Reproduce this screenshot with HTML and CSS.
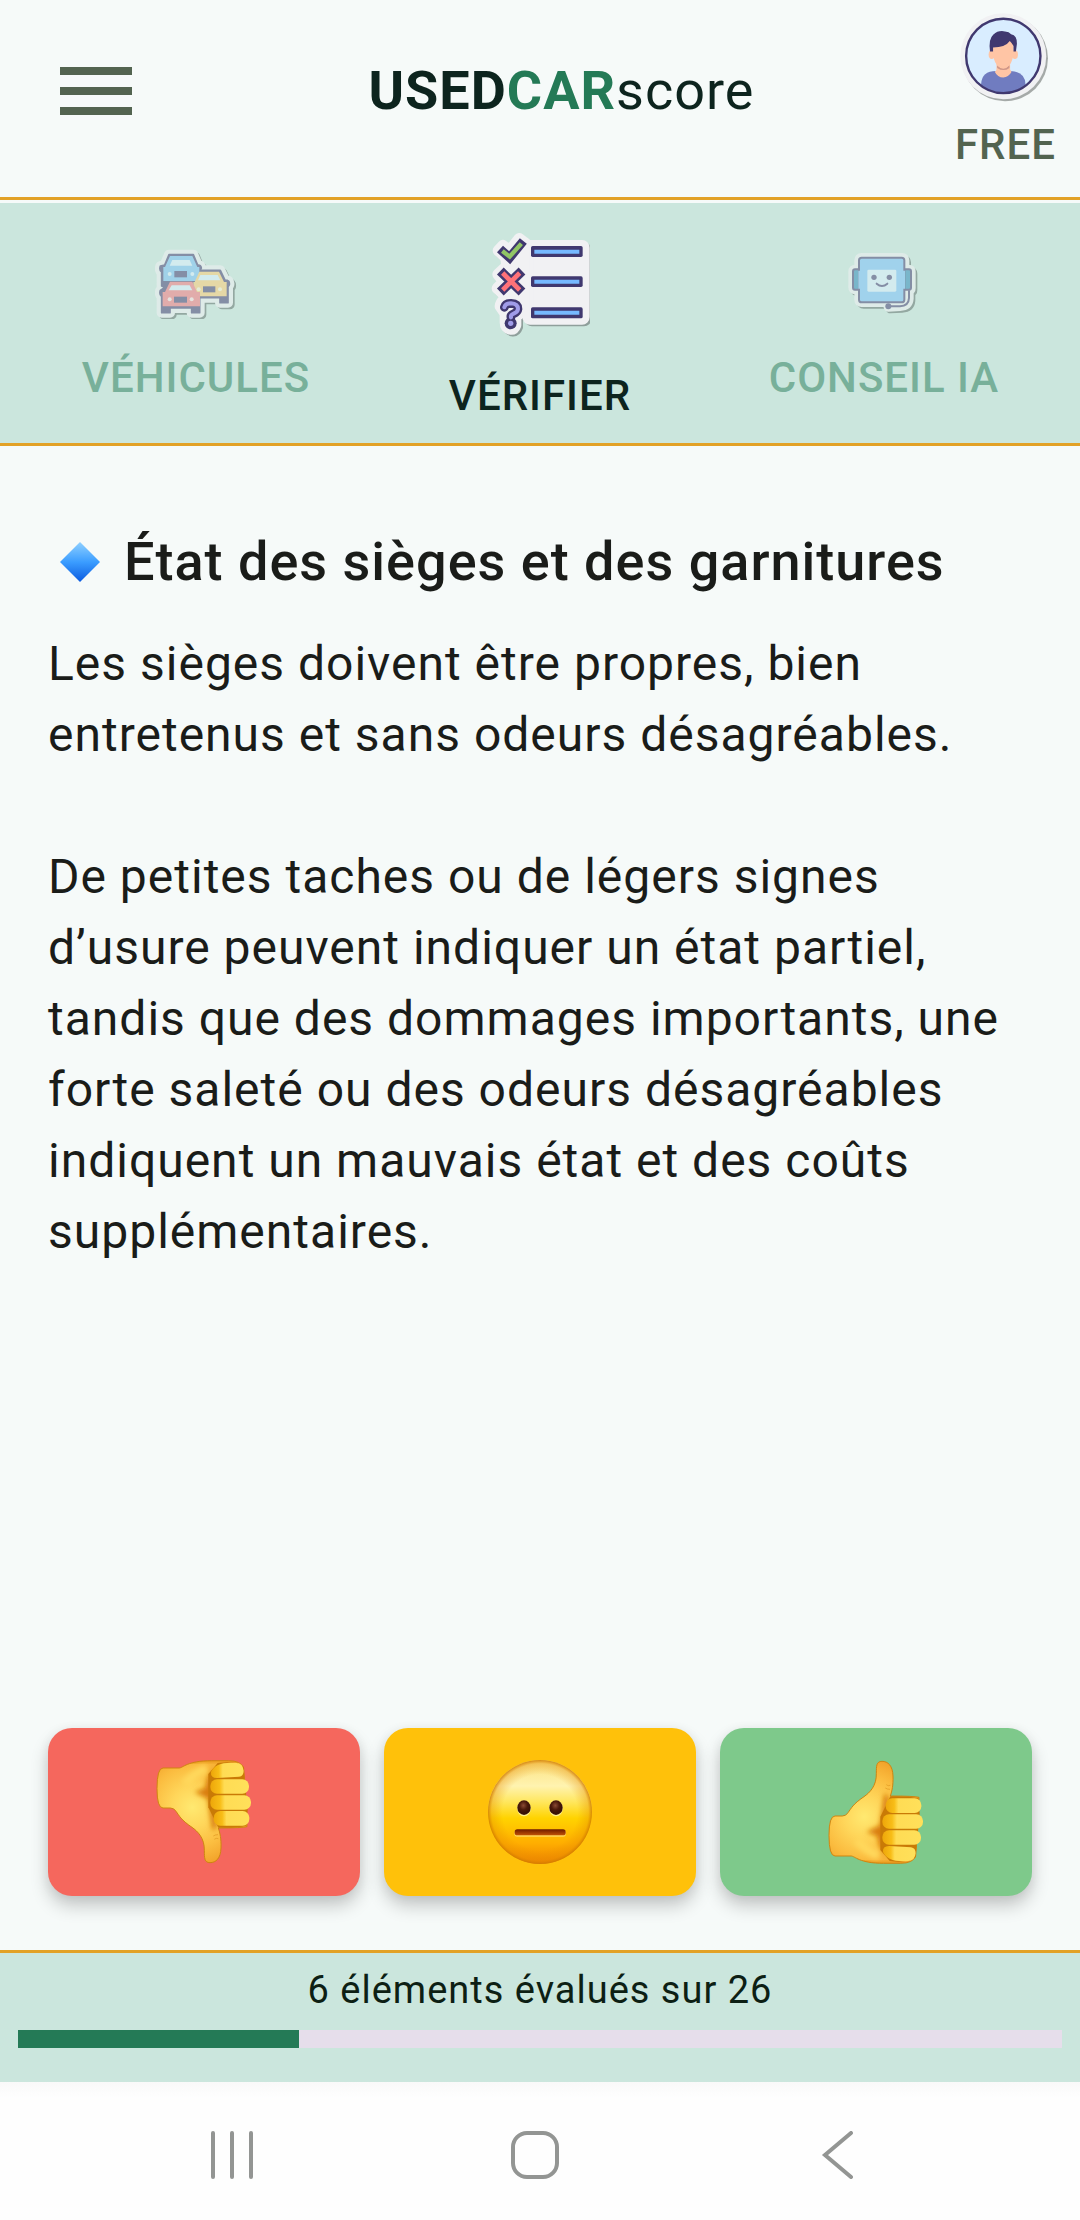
FILE: index.html
```html
<!DOCTYPE html>
<html lang="fr">
<head>
  <meta charset="UTF-8" />
  <meta name="viewport" content="width=device-width, initial-scale=1.0" />
  <title>USEDCARscore</title>
  <link rel="stylesheet" href="styles.css">
</head>
<body>
  <header class="topbar">
    <button class="menu-btn" type="button" aria-label="Menu">
      <span></span><span></span><span></span>
    </button>
    <h1 class="brand">USED<span class="brand-car">CAR</span><span class="brand-score">score</span></h1>
    <a class="account" href="#compte">
      <svg class="avatar" viewBox="0 0 264 264" aria-hidden="true">
        <defs>
          <clipPath id="face-clip"><circle cx="127" cy="126" r="108" /></clipPath>
        </defs>
        <circle cx="132" cy="133" r="126" fill="#a5aaa8" />
        <circle cx="127" cy="127" r="126" fill="#f1f1f3" />
        <circle cx="127" cy="126" r="109" fill="#d9edff" />
        <g clip-path="url(#face-clip)">
          <path d="M62 240V208Q64 170 106 170H148Q190 172 192 208V240Z" fill="#707cc0" />
          <path d="M107 148H147V166Q151 171 151 173Q142 189 127 189Q110 189 102 172Q107 170 107 165Z" fill="#ffc5a5" />
          <path d="M109 153Q127 174 145 153V161Q128 174 109 161Z" fill="#cf9688" />
          <ellipse cx="93" cy="122" rx="9" ry="13" fill="#ffc5a5" />
          <ellipse cx="161" cy="122" rx="9" ry="13" fill="#ffc5a5" />
          <path d="M97 96Q97 80 127 80Q157 80 157 96V122Q152 151 139 158Q127 165 114 158Q101 150 97 122Z" fill="#ffc5a5" />
          <path d="M88 113Q83 76 98 63Q112 50 132 54Q144 55 150 62Q168 66 167 90L164 113H157V97Q151 86 146 82Q133 101 97 101V113Z" fill="#40386f" />
        </g>
        <circle cx="127" cy="126" r="109" fill="none" stroke="#40386f" stroke-width="7" />
      </svg>
      <span class="account-plan">FREE</span>
    </a>
  </header>

  <nav class="tabs">
    <a class="tab" href="#vehicules">
      <span class="tab-icon">
        <svg class="icon-cars" viewBox="78 85 246 210" aria-hidden="true">
          <defs>
            <path id="cars-shape" d="M120 102H193L206 133Q216 132 217 142L213 149H274L288 178Q303 178 301 192L297 198V246H273V231H212V276H188V262H123V276H98V228Q90 222 94 209L107 200L98 196V154Q90 149 94 136L107 133Z" />
          </defs>
          <use href="#cars-shape" x="6" y="6" fill="#5d6b67" stroke="#5d6b67" stroke-width="28" stroke-linejoin="round" />
          <use href="#cars-shape" fill="#f1f1f3" stroke="#f1f1f3" stroke-width="30" stroke-linejoin="round" />
          <use href="#cars-shape" fill="#40386f" stroke="#40386f" stroke-width="5" stroke-linejoin="round" />
          <path d="M123 106H190L205 139H211V181H103V139H108Z" fill="#76bff5" />
          <path d="M130 118H182L190 135H122Z" fill="#dcf0ff" />
          <rect x="136" y="151" width="38" height="19" fill="#40386f" />
          <circle cx="122" cy="160" r="6" fill="#dcf0ff" /><circle cx="190" cy="160" r="6" fill="#dcf0ff" />
          <path d="M211 153H270L285 184H293V227H193V184H197Z" fill="#ffcb70" />
          <path d="M214 163H266L274 179H207Z" fill="#dcf0ff" />
          <rect x="222" y="197" width="37" height="18" fill="#40386f" />
          <circle cx="209" cy="206" r="6" fill="#fff3d0" /><circle cx="273" cy="206" r="6" fill="#fff3d0" />
          <path d="M123 183H190L204 214H213V257H101V214H108Z" fill="#f8747a" />
          <path d="M128 194H182L190 209H119Z" fill="#dcf0ff" />
          <rect x="135" y="228" width="39" height="18" fill="#40386f" />
          <circle cx="122" cy="236" r="6" fill="#ffe1e1" /><circle cx="188" cy="236" r="6" fill="#ffe1e1" />
        </svg>
      </span>
      <span class="tab-label">VÉHICULES</span>
    </a>

    <a class="tab active" href="#verifier" aria-current="page">
      <span class="tab-icon">
        <svg class="icon-list" viewBox="62 29 300 324" aria-hidden="true">
          <defs>
            <g id="list-shape">
              <rect x="176" y="76" width="168" height="220" rx="6" />
              <path d="M87 91L101 76L121 91L150 55L170 70L121 123Z" />
              <path d="M86 162L106 143L125 161L145 143L166 162L146 184L166 204L145 223L125 204L104 223L84 204L104 184Z" />
              <path d="M93 258Q96 236 127 236Q157 240 157 266Q154 280 139 288V314Q134 328 122 326Q108 322 108 306V280Z" />
              <path d="M90 80H180V290H110Z" stroke="none" />
            </g>
          </defs>
          <use href="#list-shape" x="6" y="6" fill="#8f9f9b" stroke="#8f9f9b" stroke-width="32" stroke-linejoin="round" />
          <use href="#list-shape" fill="#f1f1f3" stroke="#f1f1f3" stroke-width="34" stroke-linejoin="round" />
          <rect x="185" y="77" width="155" height="33" rx="5" fill="#40386f" />
          <rect x="185" y="168" width="155" height="32" rx="5" fill="#40386f" />
          <rect x="185" y="261" width="155" height="33" rx="5" fill="#40386f" />
          <path d="M195 88H330V100H195ZM195 178H330V190H195ZM195 271H330V283H195Z" fill="#76b9ff" />
          <path d="M92 86L121 112L162 62" fill="none" stroke="#40386f" stroke-width="27" />
          <path d="M99 92L121 109L156 70" fill="none" stroke="#91c565" stroke-width="13" />
          <path d="M93 152L158 215M158 152L93 215" fill="none" stroke="#40386f" stroke-width="29" />
          <path d="M100 158L151 209M151 158L100 209" fill="none" stroke="#ff7278" stroke-width="14" />
          <path d="M105 261Q108 249 125 249Q146 250 146 266Q145 275 133 280Q123 284 125 291" fill="none" stroke="#40386f" stroke-width="26" stroke-linecap="round" />
          <circle cx="124" cy="309" r="18" fill="#40386f" />
          <path d="M105 261Q108 249 125 249Q146 250 146 266Q145 275 133 280Q123 284 125 291" fill="none" stroke="#a09ce8" stroke-width="12" stroke-linecap="round" />
          <circle cx="124" cy="309" r="8" fill="#a09ce8" />
        </svg>
      </span>
      <span class="tab-label">VÉRIFIER</span>
    </a>

    <a class="tab" href="#conseil">
      <span class="tab-icon">
        <svg class="icon-robot" viewBox="80 82 219 192" aria-hidden="true">
          <defs>
            <path id="robot-shape" d="M121 99H242Q250 99 250 107V134H262Q269 134 269 141V190Q269 196 263 197V222Q261 244 236 245L201 247L197 233H121Q113 233 113 225V195H101Q95 195 95 188V141Q95 134 102 134H113V107Q113 99 121 99Z" />
          </defs>
          <use href="#robot-shape" x="6" y="6" fill="#5d6b67" stroke="#5d6b67" stroke-width="26" stroke-linejoin="round" />
          <use href="#robot-shape" fill="#f1f1f3" stroke="#f1f1f3" stroke-width="28" stroke-linejoin="round" />
          <g stroke="#40386f" stroke-width="6">
            <rect x="95" y="134" width="30" height="61" rx="6" fill="#2a87b8" />
            <rect x="239" y="134" width="30" height="61" rx="6" fill="#2a87b8" />
            <rect x="113" y="99" width="136" height="134" rx="8" fill="#76c0fc" />
            <path d="M263 197V220Q262 244 236 245H201" fill="none" />
          </g>
          <path d="M115 138V192M247 138V192" stroke="#76c0fc" stroke-width="8" />
          <rect x="138" y="135" width="87" height="66" rx="4" fill="#dcf0ff" />
          <circle cx="158" cy="158" r="8" fill="#40386f" />
          <circle cx="204" cy="158" r="8" fill="#40386f" />
          <path d="M166 177Q182 191 198 177" fill="none" stroke="#40386f" stroke-width="6" stroke-linecap="round" />
          <circle cx="201" cy="245" r="9" fill="#40386f" />
        </svg>
      </span>
      <span class="tab-label">CONSEIL IA</span>
    </a>
  </nav>

  <main class="content">
    <h2 class="check-title">
      <svg class="diamond" viewBox="0 0 40 40" aria-hidden="true">
        <defs>
          <linearGradient id="diamond-fill" x1="0" y1="0" x2="0" y2="1">
            <stop offset="0" stop-color="#8fd0ff" />
            <stop offset="0.5" stop-color="#3b9dff" />
            <stop offset="1" stop-color="#0b5be0" />
          </linearGradient>
        </defs>
        <path d="M20 0L40 20L20 40L0 20Z" fill="url(#diamond-fill)" />
      </svg>
      État des sièges et des garnitures
    </h2>
    <p>Les sièges doivent être propres, bien entretenus et sans odeurs désagréables.</p>
    <p>De petites taches ou de légers signes d’usure peuvent indiquer un état partiel, tandis que des dommages importants, une forte saleté ou des odeurs désagréables indiquent un mauvais état et des coûts supplémentaires.</p>
  </main>

  <div class="ratings">
    <button class="rate rate-bad" type="button" aria-label="Mauvais">
      <svg class="thumb" viewBox="-3 0 300 312" aria-hidden="true">
        <defs>
          <radialGradient id="hand-fill" gradientUnits="userSpaceOnUse" cx="112" cy="170" r="175">
            <stop offset="0" stop-color="#ffe971" />
            <stop offset="0.35" stop-color="#ffd65a" />
            <stop offset="0.7" stop-color="#fbbd40" />
            <stop offset="1" stop-color="#f2a32a" />
          </radialGradient>
          <linearGradient id="finger-fill" x1="0" y1="0" x2="1" y2="0">
            <stop offset="0" stop-color="#eda60a" />
            <stop offset="0.24" stop-color="#f8bd17" />
            <stop offset="0.36" stop-color="#ffdc54" />
            <stop offset="1" stop-color="#ffe05a" />
          </linearGradient>
          <filter id="soft" x="-40%" y="-40%" width="180%" height="180%">
            <feGaussianBlur stdDeviation="8" />
          </filter>
          <clipPath id="hand-clip">
            <path d="M165 4C148 4 148 18 148 40C149 78 128 98 111 110C77 133 73 145 63 158Q57 168 46 168H24Q6 168 6 226Q6 288 24 288H72C84 288 96 310 170 310H220Q258 310 266 288L276 112Q260 108 190 108C195 93 199 76 198 48C197 17 183 4 165 4Z" />
          </clipPath>
          <g id="thumb-shape">
            <g clip-path="url(#hand-clip)">
              <rect width="300" height="312" fill="url(#hand-fill)" />
              <path d="M172 100L186 112L172 290L156 256L150 228L118 216L158 196Z" fill="#d97d08" filter="url(#soft)" />
              <path d="M80 306Q120 318 250 320" fill="none" stroke="#d98110" stroke-width="14" filter="url(#soft)" />
              <path d="M0 292H75" stroke="#e27d08" stroke-width="24" filter="url(#soft)" />
              <path d="M90 240Q125 280 155 286" fill="none" stroke="#ffd85c" stroke-width="26" filter="url(#soft)" />
            </g>
            <path d="M165 4C148 4 148 18 148 40C149 78 128 98 111 110C77 133 73 145 63 158Q57 168 46 168H24Q6 168 6 226Q6 288 24 288H72C84 288 96 310 170 310H220Q258 310 266 288L276 112Q260 108 190 108C195 93 199 76 198 48C197 17 183 4 165 4Z" fill="none" stroke="#cf8510" stroke-width="3" />
            <path d="M190 109Q244 107 274 115L278 160L266 292Q240 310 188 303L160 270V170Z" fill="#c97a06" />
            <rect x="176" y="115" width="107" height="44" rx="20" fill="url(#finger-fill)" />
            <rect x="166" y="163" width="122" height="43" rx="20" fill="url(#finger-fill)" />
            <rect x="166" y="211" width="116" height="43" rx="20" fill="url(#finger-fill)" />
            <path d="M168 276Q166 258 186 258L252 262Q266 264 266 280Q264 302 244 303Q182 308 168 276Z" fill="url(#finger-fill)" />
            <path d="M189 88Q180 88 175 84M190 76Q183 79 178 74" fill="none" stroke="#e9a52c" stroke-width="3" />
          </g>
        </defs>
        <use href="#thumb-shape" transform="matrix(1 0 0 -1 0 312)" />
      </svg>
    </button>
    <button class="rate rate-medium" type="button" aria-label="Moyen">
      <svg class="face" viewBox="0 0 312 312" aria-hidden="true">
        <defs>
          <linearGradient id="face-fill" x1="0" y1="0" x2="0" y2="1">
            <stop offset="0" stop-color="#fbe07d" />
            <stop offset="0.25" stop-color="#fff3b0" />
            <stop offset="0.4" stop-color="#ffe75f" />
            <stop offset="0.56" stop-color="#ffd300" />
            <stop offset="0.8" stop-color="#ffae00" />
            <stop offset="1" stop-color="#ee8200" />
          </linearGradient>
          <radialGradient id="face-edge">
            <stop offset="0.72" stop-color="#e58a00" stop-opacity="0" />
            <stop offset="0.93" stop-color="#e58a00" stop-opacity="0.35" />
            <stop offset="1" stop-color="#cf7a00" stop-opacity="0.85" />
          </radialGradient>
          <radialGradient id="eye-fill" cx="0.45" cy="0.35">
            <stop offset="0" stop-color="#8a4a33" />
            <stop offset="0.6" stop-color="#4a1a0b" />
            <stop offset="1" stop-color="#3a1206" />
          </radialGradient>
          <linearGradient id="mouth-fill" x1="0" y1="0" x2="0" y2="1">
            <stop offset="0" stop-color="#701c00" />
            <stop offset="1" stop-color="#c25304" />
          </linearGradient>
        </defs>
        <circle cx="156" cy="156" r="156" fill="url(#face-fill)" />
        <circle cx="156" cy="156" r="156" fill="url(#face-edge)" />
        <ellipse cx="108" cy="145" rx="21" ry="24" fill="#fff08a" />
        <ellipse cx="204" cy="145" rx="21" ry="24" fill="#fff08a" />
        <ellipse cx="108" cy="143" rx="20" ry="22" fill="url(#eye-fill)" />
        <ellipse cx="204" cy="143" rx="20" ry="22" fill="url(#eye-fill)" />
        <rect x="79" y="211" width="155" height="19" rx="9" fill="#ffd65a" />
        <rect x="80" y="208" width="153" height="18" rx="8" fill="url(#mouth-fill)" />
      </svg>
    </button>
    <button class="rate rate-good" type="button" aria-label="Bon">
      <svg class="thumb" viewBox="-3 0 300 312" aria-hidden="true">
        <use href="#thumb-shape" />
      </svg>
    </button>
  </div>

  <section class="progress">
    <label class="progress-label" for="score">6 éléments évalués sur 26</label>
    <progress id="score" class="progress-bar" value="7" max="26"></progress>
  </section>

  <footer class="sysnav">
    <button class="sys-btn" type="button" aria-label="Applications récentes">
      <svg viewBox="0 0 48 48" aria-hidden="true"><path d="M5 2V46M24 2V46M43 2V46" /></svg>
    </button>
    <button class="sys-btn" type="button" aria-label="Accueil">
      <svg viewBox="0 0 48 48" aria-hidden="true"><rect x="2" y="2" width="44" height="44" rx="14" /></svg>
    </button>
    <button class="sys-btn" type="button" aria-label="Retour">
      <svg viewBox="0 0 48 48" aria-hidden="true"><path d="M37 2L11 24L37 46" /></svg>
    </button>
  </footer>
</body>
</html>
```
FILE: styles.css
```css
* {
  box-sizing: border-box;
}

body {
  margin: 0;
  min-height: 100vh;
  display: flex;
  flex-direction: column;
  font-family: Roboto, sans-serif;
  letter-spacing: 1px;
  background: #f6faf9;
  color: #1a1c19;
}

button {
  padding: 0;
  border: none;
  background: none;
  font: inherit;
  cursor: pointer;
}

a {
  color: inherit;
  text-decoration: none;
}

svg {
  display: block;
}

/* header */
.topbar {
  display: flex;
  align-items: center;
  height: 200px;
  padding: 0 24px 16px;
  border-bottom: 3px solid #e2a126;
  margin-bottom: 3px;
}

.menu-btn {
  display: flex;
  flex-direction: column;
  gap: 12px;
  width: 144px;
  padding: 36px;
}

.menu-btn span {
  height: 8px;
  background: #536450;
}

.brand {
  flex: 1;
  margin: 0;
  font-size: 54px;
  font-weight: 700;
  line-height: 64px;
  text-align: center;
  color: #0d241e;
}

.brand-car {
  color: #247a56;
}

.brand-score {
  font-weight: 400;
}

.account {
  display: flex;
  flex-direction: column;
  align-items: center;
  gap: 18px;
}

.avatar {
  width: 90px;
  height: 90px;
}

.account-plan {
  font-size: 42px;
  font-weight: 500;
  line-height: 48px;
  color: #536450;
}

/* tabs */
.tabs {
  display: grid;
  grid-template-columns: repeat(3, 1fr);
  align-items: center;
  height: 243px;
  padding: 4px 24px 0;
  background: #cbe6dd;
  border-bottom: 3px solid #e2a126;
}

.tab {
  display: flex;
  flex-direction: column;
  align-items: center;
  gap: 34px;
  color: #0d241e;
}

.tab-icon {
  display: flex;
  align-items: center;
  justify-content: center;
  height: 72px;
}

.tab.active .tab-icon {
  height: 108px;
}

.tab:not(.active) .tab-icon {
  opacity: 0.5;
}

.tab:not(.active) .tab-label {
  color: #78b09a;
}

.tab-label {
  font-size: 42px;
  font-weight: 500;
  line-height: 48px;
}

.icon-cars {
  width: 82px;
  height: 70px;
}

.icon-list {
  width: 100px;
  height: 108px;
}

.icon-robot {
  width: 73px;
  height: 64px;
}

/* checklist item */
.content {
  flex: 1;
  padding: 80px 48px 0;
}

.check-title {
  display: flex;
  align-items: center;
  gap: 24px;
  margin: 0;
  padding-left: 12px;
  font-size: 54px;
  font-weight: 500;
  line-height: 72px;
}

.diamond {
  width: 40px;
  height: 40px;
}

.content p {
  margin: 0 0 71px;
  font-size: 48px;
  line-height: 71px;
}

.check-title + p {
  margin-top: 30px;
}

.ratings {
  display: grid;
  grid-template-columns: repeat(3, 1fr);
  gap: 24px;
  padding: 0 48px 54px;
}

.rate {
  display: flex;
  align-items: center;
  justify-content: center;
  height: 168px;
  border-radius: 24px;
  box-shadow: 0 10px 18px rgba(0, 0, 0, 0.2), 0 2px 12px rgba(0, 0, 0, 0.06);
}

.rate-bad {
  background: #f5675d;
}

.rate-medium {
  background: #ffc10a;
}

.rate-good {
  background: #7ec98b;
}

.thumb {
  width: 100px;
  height: 104px;
}

.face {
  width: 104px;
  height: 104px;
}

/* progress */
.progress {
  display: flex;
  flex-direction: column;
  gap: 16px;
  padding: 13px 18px 34px;
  background: #cbe6dd;
  border-top: 3px solid #e2a126;
}

.progress-label {
  font-size: 38px;
  line-height: 48px;
  text-align: center;
  color: #0d1f14;
}

.progress-bar {
  appearance: none;
  display: block;
  width: 100%;
  height: 18px;
  border: none;
  background: #e6deeb;
}

.progress-bar::-webkit-progress-bar {
  background: #e6deeb;
}

.progress-bar::-webkit-progress-value {
  background: #247a56;
}

.progress-bar::-moz-progress-bar {
  background: #247a56;
}

/* system navigation */
.sysnav {
  display: flex;
  justify-content: space-between;
  align-items: center;
  height: 138px;
  padding: 8px 218px 0 208px;
  background: linear-gradient(#f9f9f9, #fefefe 16px);
}

.sys-btn svg {
  width: 48px;
  height: 48px;
  fill: none;
  stroke: #939593;
  stroke-width: 4;
  stroke-linecap: round;
}
```
